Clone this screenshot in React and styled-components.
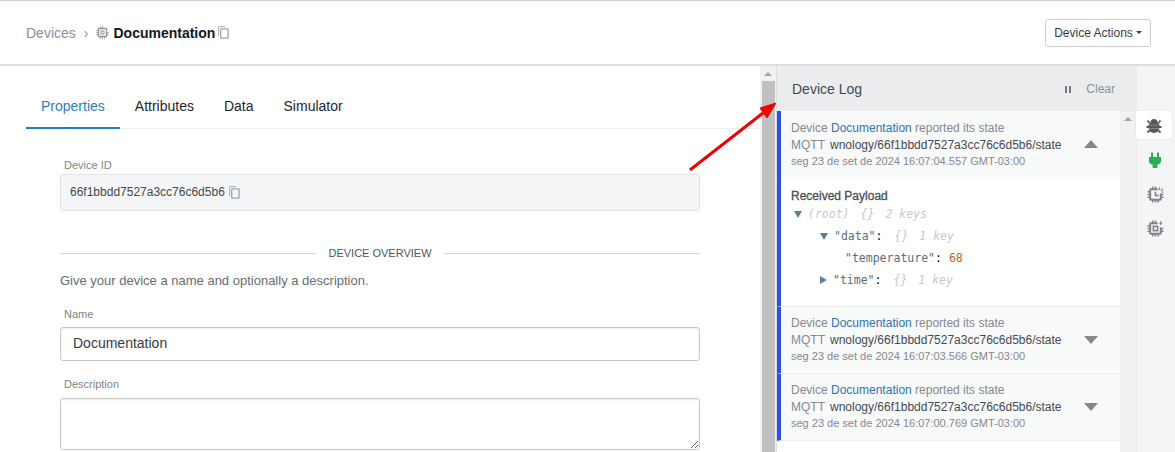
import React from "react";
import styled, { createGlobalStyle } from "styled-components";

const GlobalStyle = createGlobalStyle`
  html, body {
    margin: 0;
    padding: 0;
    height: 452px;
    overflow: hidden;
    background: #fff;
    font-family: "Liberation Sans", Arial, sans-serif;
  }
`;

const Page = styled.div`
  position: relative;
  width: 1175px;
  height: 452px;
  overflow: hidden;
  display: flex;
  flex-direction: column;
  border-top: 1px solid #d0d0d2;
  box-sizing: border-box;
`;

const Header = styled.header`
  height: 63px;
  flex: none;
  display: flex;
  align-items: center;
  justify-content: space-between;
  padding: 0 24px 0 26px;
  border-bottom: 2px solid #dedee1;
`;

const Crumbs = styled.div`
  display: flex;
  align-items: center;
  font-size: 14px;
`;

const CrumbLink = styled.span`
  color: #8c8f96;
`;

const CrumbSep = styled.span`
  color: #8c8f96;
  margin: 0 8px;
  font-size: 14px;
`;

const CrumbName = styled.span`
  font-weight: 700;
  color: #15171c;
  margin: 0 3px 0 4px;
`;

const ActionButton = styled.button`
  height: 28px;
  width: 106px;
  padding: 0;
  display: flex;
  align-items: center;
  justify-content: center;
  gap: 3px;
  background: #fff;
  border: 1px solid #ccc;
  border-radius: 3px;
  font: 12px "Liberation Sans", Arial, sans-serif;
  color: #363a45;
`;

const Caret = styled.span`
  width: 0;
  height: 0;
  border-left: 3px solid transparent;
  border-right: 3px solid transparent;
  border-top: 3px solid #363a45;
`;

const Body = styled.div`
  flex: 1;
  min-height: 0;
  display: flex;
`;

const Main = styled.main`
  width: 760px;
  flex: none;
  overflow: hidden;
  padding-top: 23px;
  box-sizing: border-box;
`;

const Tabs = styled.nav`
  display: flex;
  margin-left: 26px;
  border-bottom: 1px solid #eeeeef;
  height: 39px;
`;

const Tab = styled.div`
  padding: 0 15px;
  height: 38px;
  line-height: 35px;
  font-size: 14px;
  color: ${(p) => (p.$active ? "#2b80bc" : "#23262e")};
  border-bottom: ${(p) => (p.$active ? "2px solid #2780b9" : "none")};
`;

const Form = styled.div`
  width: 640px;
  margin: 30px 0 0 60px;
`;

const Label = styled.div`
  font-size: 11px;
  line-height: 13px;
  color: #80838a;
  margin: 0 0 ${(p) => p.$gap || 2}px 4px;
`;

const ReadOnlyField = styled.div`
  height: 37px;
  box-sizing: border-box;
  display: flex;
  align-items: center;
  padding: 0 0 1px 9px;
  background: #f4f5f6;
  border: 1px solid #e3e4e6;
  border-radius: 3px;
  font-size: 12px;
  color: #454850;
  gap: 4px;
`;

const Divider = styled.div`
  display: flex;
  align-items: center;
  gap: 12px;
  margin-top: 35px;
  font-size: 11px;
  color: #4d5560;
  line-height: 14px;
  &::before, &::after {
    content: "";
    flex: 1;
    height: 1px;
    background: #d4d4d6;
  }
`;

const Hint = styled.p`
  margin: 13px 0 0;
  font-size: 13px;
  line-height: 16px;
  color: #686b72;
`;

const NameLabel = styled(Label)`
  margin-top: 19px;
`;

const DescLabel = styled(Label)`
  margin-top: 17px;
`;

const TextInput = styled.input`
  display: block;
  width: 100%;
  height: 34px;
  box-sizing: border-box;
  padding: 0 12px 2px;
  border: 1px solid #c8c8ca;
  border-radius: 3px;
  box-shadow: inset 0 1px 2px rgba(0, 0, 0, 0.08);
  font: 14px "Liberation Sans", Arial, sans-serif;
  color: #363a45;
  outline: none;
`;

const TextArea = styled.textarea`
  display: block;
  width: 100%;
  height: 52px;
  box-sizing: border-box;
  border: 1px solid #c8c8ca;
  border-radius: 3px;
  box-shadow: inset 0 1px 2px rgba(0, 0, 0, 0.08);
  outline: none;
`;

const Scrollbar = styled.div`
  width: 16px;
  flex: none;
  background: #f1f1f1;
  display: flex;
  flex-direction: column;
  align-items: center;
`;

const ScrollArrow = styled.span`
  flex: none;
  margin: 6px 0 5px;
  width: 0;
  height: 0;
  border-left: 4px solid transparent;
  border-right: 4px solid transparent;
  border-bottom: 4px solid #a3a3a3;
`;

const ScrollThumb = styled.div`
  width: 13px;
  flex: 1;
  background: #c1c1c1;
`;

const LogPanel = styled.section`
  width: 360px;
  flex: none;
  display: flex;
  flex-direction: column;
  background: #fff;
  border-left: 1px solid #dcdcdf;
  box-sizing: border-box;
`;

const LogHeader = styled.div`
  height: 45px;
  flex: none;
  display: flex;
  align-items: center;
  padding: 0 21px 0 15px;
  background: #ebecee;
  font-size: 14px;
  color: #444852;
`;

const LogTitle = styled.span`
  flex: 1;
`;

const Pause = styled.span`
  display: flex;
  gap: 2px;
  margin: 1px 15px 0 0;
  &::before, &::after {
    content: "";
    width: 2px;
    height: 7px;
    background: #777a80;
  }
`;

const Clear = styled.span`
  font-size: 12px;
  color: #8c9098;
`;

const LogBody = styled.div`
  flex: 1;
  min-height: 0;
  display: flex;
`;

const LogList = styled.div`
  flex: 1;
  min-width: 0;
  overflow: hidden;
`;

const LogEntry = styled.article`
  border-left: 4px solid #2b4ff0;
  border-bottom: 1px solid #ecedee;
`;

const LogRow = styled.div`
  height: 66px;
  box-sizing: border-box;
  padding: ${(p) => (p.$open ? 9 : 8)}px 0 0 10px;
  background: #f8f9f9;
  position: relative;
  display: flex;
  flex-direction: column;
`;

const LogLine = styled.div`
  font-size: 12px;
  line-height: 17px;
  color: #858890;
  white-space: nowrap;
`;

const DeviceLink = styled.span`
  color: #2d74b4;
`;

const Topic = styled.span`
  color: #454a56;
  margin-left: 5px;
`;

const LogTime = styled.div`
  font-size: 11px;
  line-height: 15px;
  color: #858890;
  white-space: nowrap;
`;

const Toggle = styled.span`
  position: absolute;
  right: 22px;
  top: 29px;
  width: 0;
  height: 0;
  border-left: 7.5px solid transparent;
  border-right: 7.5px solid transparent;
  ${(p) =>
    p.$open ? "border-bottom: 8px solid #858890;" : "border-top: 8px solid #858890;"}
`;

const Payload = styled.div`
  padding: 12px 0 15px 10px;
  background: #fff;
`;

const PayloadTitle = styled.div`
  font-size: 12px;
  line-height: 14px;
  color: #4a4d55;
  -webkit-text-stroke: 0.3px #4a4d55;
`;

const TreeRow = styled.div`
  display: flex;
  align-items: center;
  height: 22px;
  padding-left: ${(p) => p.$indent}px;
  font: 11.5px "DejaVu Sans Mono", "Liberation Mono", monospace;
  white-space: pre;
`;

const TreeArrow = styled.span`
  width: 0;
  height: 0;
  margin-right: 6px;
  ${(p) =>
    p.$open
      ? "border-left: 4px solid transparent; border-right: 4px solid transparent; border-top: 7px solid #5f7f99;"
      : "border-top: 4px solid transparent; border-bottom: 4px solid transparent; border-left: 7px solid #5f7f99;"}
`;

const TreeKey = styled.span`
  color: #5a6d80;
`;

const TreeMeta = styled.span`
  color: #c9c9c9;
  font-style: italic;
  margin-left: ${(p) => p.$gap || 0}px;
`;

const TreeNumber = styled.span`
  color: #b0642a;
`;

const SideRail = styled.aside`
  flex: 1;
  background: #f4f5f6;
  border-left: 1px solid #ebebec;
  padding-top: 45px;
  display: flex;
  flex-direction: column;
  align-items: flex-start;
`;

const RailButton = styled.div`
  width: 36px;
  height: 28px;
  margin-bottom: ${(p) => (p.$active ? 7 : 6)}px;
  margin-left: ${(p) => (p.$active ? "-1px" : "0")};
  display: flex;
  align-items: center;
  justify-content: center;
  background: ${(p) => (p.$active ? "#fff" : "transparent")};
  border-radius: ${(p) => (p.$active ? "0 3px 3px 0" : "0")};
  ${(p) => p.$active && "box-shadow: 0 0 1px rgba(0,0,0,0.25);"}
`;

const Arrow = styled.svg`
  position: absolute;
  left: 685px;
  top: 75px;
  pointer-events: none;
`;

function CopyIcon({ size = 11 }) {
  return (
    <svg width={size} height={size + 2} viewBox="0 0 11 13" fill="none" stroke="#a2a4a8">
      <path d="M0.6 10V0.6H7" strokeWidth="0.9" />
      <rect x="2.7" y="2.8" width="7.4" height="9.4" rx="0.8" strokeWidth="1.3" />
    </svg>
  );
}

// chip outline, top right corner left open for the status sparkle
function ChipIcon({ size = 17, color = "#808388", children }) {
  return (
    <svg width={size} height={size} viewBox="0 0 16 16" fill="none" stroke={color}>
      <path d="M10 3H3.500a.5.5 0 0 0-.5.5V12.500a.5.5 0 0 0 .5.5H12.500a.5.5 0 0 0 .5-.5V7" strokeWidth="1.8" />
      <path
        d="M5.500 0.500V3M8 0.500V3M5.500 13V15.500M8 13V15.500M10.500 13V15.500M0.500 5.500H3M0.500 8H3M0.500 10.500H3M13 8H15.500M13 10.500H15.500"
        strokeWidth="1.4"
      />
      {children}
    </svg>
  );
}

function BugIcon() {
  return (
    <svg width="16" height="17" viewBox="0 0 16 16" fill="#55585d">
      <ellipse cx="8" cy="9.300" rx="5.600" ry="6.200" />
      <path d="M4.400 4.300a3.700 3.500 0 0 1 7.200 0z" />
      <path
        d="M3.500 5.500L1.500 3M12.500 5.500l2-2.500M3 9.500H0.500M13 9.500h2.500M3.500 13L1.500 15M12.500 13l2 2"
        stroke="#55585d"
        strokeWidth="1.800"
      />
      <path d="M3 7.700h10M3 11h10" stroke="#9a9c9f" strokeWidth="0.7" />
    </svg>
  );
}

function PlugIcon() {
  return (
    <svg width="12" height="16" viewBox="0 0 12 16" fill="#28b04e">
      <path d="M2 0.500h2V5h4V0.500h2V5h2v4.200c0 1.700-1.600 3-3.600 3.300V16H3.600v-3.500C1.600 12.200 0 10.900 0 9.200V5h2z" />
    </svg>
  );
}

const logEntries = [
  { time: "seg 23 de set de 2024 16:07:04.557 GMT-03:00", open: true },
  { time: "seg 23 de set de 2024 16:07:03.566 GMT-03:00" },
  { time: "seg 23 de set de 2024 16:07:00.769 GMT-03:00" },
];

function JsonTree() {
  return (
    <>
      <TreeRow $indent={3}>
        <TreeArrow $open />
        <TreeMeta>(root)</TreeMeta>
        <TreeMeta $gap={11}>{"{}"}</TreeMeta>
        <TreeMeta $gap={11}>2 keys</TreeMeta>
      </TreeRow>
      <TreeRow $indent={29}>
        <TreeArrow $open />
        <TreeKey>"data"</TreeKey>:
        <TreeMeta $gap={12}>{"{}"}</TreeMeta>
        <TreeMeta $gap={11}>1 key</TreeMeta>
      </TreeRow>
      <TreeRow $indent={54}>
        <TreeKey>"temperature"</TreeKey>: <TreeNumber>68</TreeNumber>
      </TreeRow>
      <TreeRow $indent={29}>
        <TreeArrow />
        <TreeKey>"time"</TreeKey>:
        <TreeMeta $gap={12}>{"{}"}</TreeMeta>
        <TreeMeta $gap={11}>1 key</TreeMeta>
      </TreeRow>
    </>
  );
}

export default function App() {
  return (
    <Page>
      <GlobalStyle />
      <Header>
        <Crumbs>
          <CrumbLink>Devices</CrumbLink>
          <CrumbSep>›</CrumbSep>
          <ChipIcon size={13} color="#96989c">
            <path d="M10 3h3v4" strokeWidth="1.800" />
            <rect x="6.200" y="6.200" width="3.600" height="3.600" strokeWidth="1.300" />
          </ChipIcon>
          <CrumbName>Documentation</CrumbName>
          <CopyIcon />
        </Crumbs>
        <ActionButton>
          Device Actions <Caret />
        </ActionButton>
      </Header>
      <Body>
        <Main>
          <Tabs>
            <Tab $active>Properties</Tab>
            <Tab>Attributes</Tab>
            <Tab>Data</Tab>
            <Tab>Simulator</Tab>
          </Tabs>
          <Form>
            <Label>Device ID</Label>
            <ReadOnlyField>
              66f1bbdd7527a3cc76c6d5b6
              <CopyIcon />
            </ReadOnlyField>
            <Divider>DEVICE OVERVIEW</Divider>
            <Hint>Give your device a name and optionally a description.</Hint>
            <NameLabel $gap={6}>Name</NameLabel>
            <TextInput defaultValue="Documentation" />
            <DescLabel $gap={7}>Description</DescLabel>
            <TextArea />
          </Form>
        </Main>
        <Scrollbar>
          <ScrollArrow />
          <ScrollThumb />
        </Scrollbar>
        <LogPanel>
          <LogHeader>
            <LogTitle>Device Log</LogTitle>
            <Pause />
            <Clear>Clear</Clear>
          </LogHeader>
          <LogBody>
            <LogList>
              {logEntries.map((entry) => (
                <LogEntry key={entry.time}>
                  <LogRow $open={entry.open}>
                    <LogLine>
                      Device <DeviceLink>Documentation</DeviceLink> reported its state
                    </LogLine>
                    <LogLine>
                      MQTT<Topic>wnology/66f1bbdd7527a3cc76c6d5b6/state</Topic>
                    </LogLine>
                    <LogTime>{entry.time}</LogTime>
                    <Toggle $open={entry.open} />
                  </LogRow>
                  {entry.open && (
                    <Payload>
                      <PayloadTitle>Received Payload</PayloadTitle>
                      <JsonTree />
                    </Payload>
                  )}
                </LogEntry>
              ))}
            </LogList>
            <Scrollbar>
              <ScrollArrow />
            </Scrollbar>
          </LogBody>
        </LogPanel>
        <SideRail>
          <RailButton $active>
            <BugIcon />
          </RailButton>
          <RailButton>
            <PlugIcon />
          </RailButton>
          <RailButton>
            <ChipIcon>
              <path d="M8 5.500V9H11" strokeWidth="1.500" />
              <path d="M12 1L11 4M15 2.500L13 4.500M15.500 5.500L14 6" strokeWidth="1" />
            </ChipIcon>
          </RailButton>
          <RailButton>
            <ChipIcon>
              <rect x="6" y="6" width="4" height="4" strokeWidth="1.500" />
              <path d="M13 1V5M11.500 3H14.500" strokeWidth="1" />
            </ChipIcon>
          </RailButton>
        </SideRail>
      </Body>
      <Arrow width="95" height="100" viewBox="0 0 95 100">
        <path d="M5 94L78 37" stroke="#f00000" strokeWidth="3" />
        <path d="M91 27L75 32L82 42Z" fill="#f00000" stroke="#f00000" />
      </Arrow>
    </Page>
  );
}
